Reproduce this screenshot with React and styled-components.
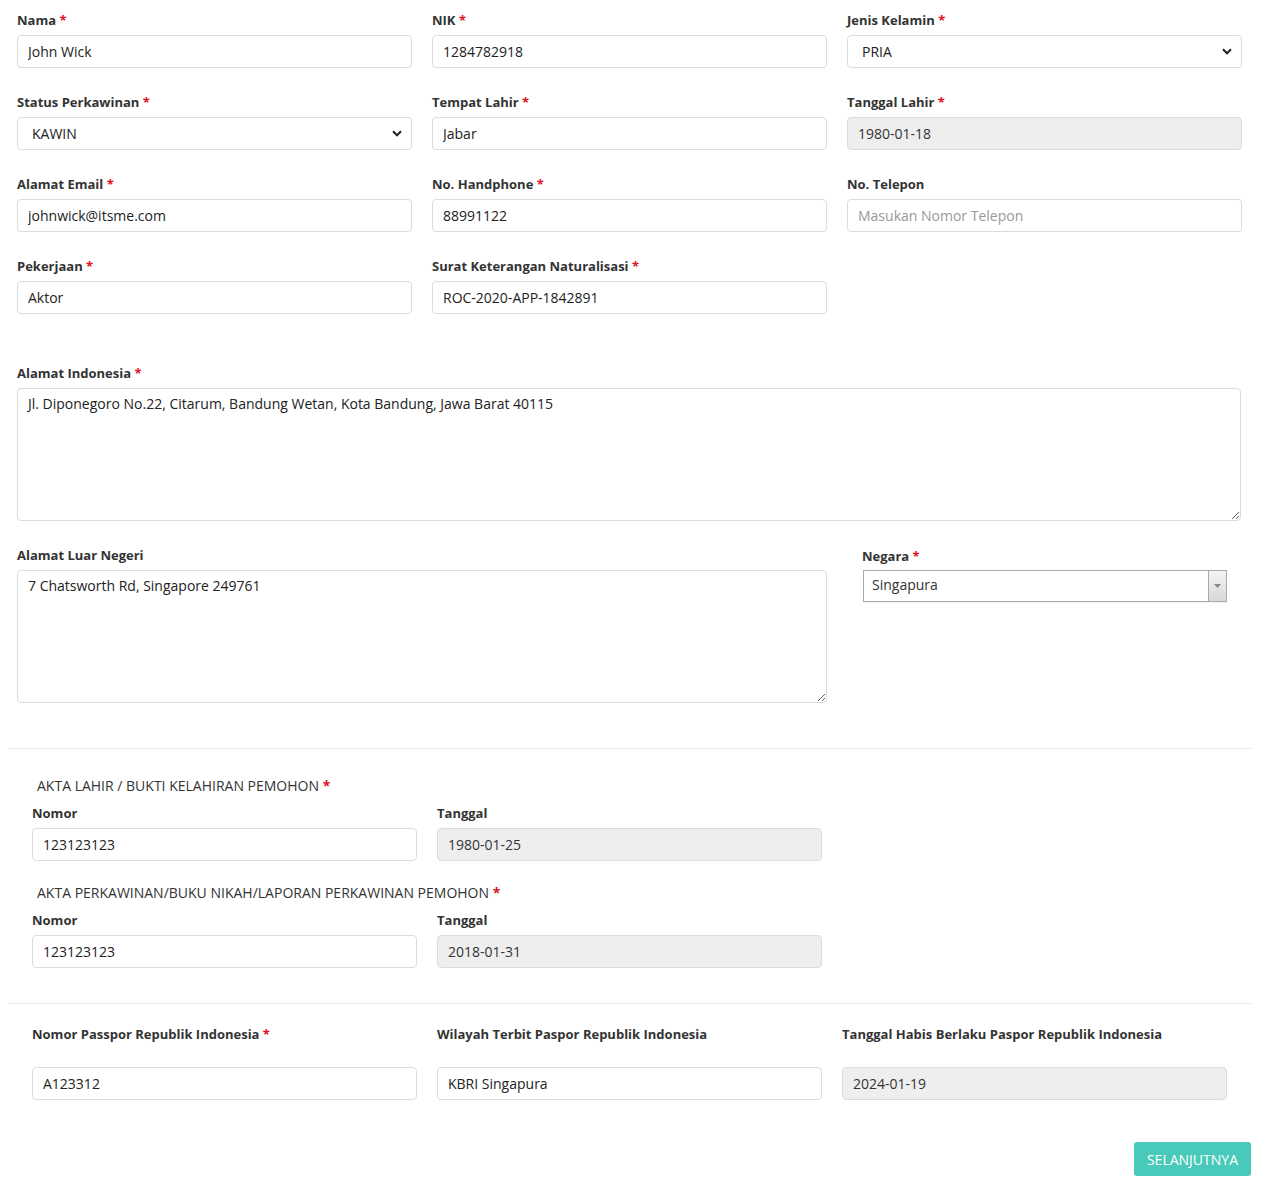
import styled, { createGlobalStyle } from 'styled-components';

const GlobalStyle = createGlobalStyle`
  * { box-sizing: border-box; }
  body {
    margin: 0;
    background: #fff;
    font-family: "Open Sans", "Liberation Sans", sans-serif;
    color: #333;
  }
`;

const chevron =
  "url(\"data:image/svg+xml;utf8,<svg xmlns='http://www.w3.org/2000/svg' width='10' height='7' viewBox='0 0 10 7'><path d='M1 1.3l4 4 4-4' fill='none' stroke='%23222' stroke-width='2'/></svg>\")";

const App = () => {
  return (
    <Page>
      <GlobalStyle />
      <TopSection>
        <Grid>
          <Field>
            <Label>Nama <Req>*</Req></Label>
            <Input defaultValue="John Wick" />
          </Field>
          <Field>
            <Label>NIK <Req>*</Req></Label>
            <Input defaultValue="1284782918" />
          </Field>
          <Field>
            <Label>Jenis Kelamin <Req>*</Req></Label>
            <Select defaultValue="PRIA">
              <option>PRIA</option>
              <option>WANITA</option>
            </Select>
          </Field>

          <Field>
            <Label>Status Perkawinan <Req>*</Req></Label>
            <Select defaultValue="KAWIN">
              <option>KAWIN</option>
              <option>BELUM KAWIN</option>
            </Select>
          </Field>
          <Field>
            <Label>Tempat Lahir <Req>*</Req></Label>
            <Input defaultValue="Jabar" />
          </Field>
          <Field>
            <Label>Tanggal Lahir <Req>*</Req></Label>
            <Input defaultValue="1980-01-18" disabled />
          </Field>

          <Field>
            <Label>Alamat Email <Req>*</Req></Label>
            <Input defaultValue="johnwick@itsme.com" />
          </Field>
          <Field>
            <Label>No. Handphone <Req>*</Req></Label>
            <Input defaultValue="88991122" />
          </Field>
          <Field>
            <Label>No. Telepon</Label>
            <Input placeholder="Masukan Nomor Telepon" />
          </Field>

          <Field>
            <Label>Pekerjaan <Req>*</Req></Label>
            <Input defaultValue="Aktor" />
          </Field>
          <Field>
            <Label>Surat Keterangan Naturalisasi <Req>*</Req></Label>
            <Input defaultValue="ROC-2020-APP-1842891" />
          </Field>
        </Grid>

        <AddressBlock>
          <Field>
            <Label>Alamat Indonesia <Req>*</Req></Label>
            <TextArea defaultValue="Jl. Diponegoro No.22, Citarum, Bandung Wetan, Kota Bandung, Jawa Barat 40115" />
          </Field>
        </AddressBlock>

        <AbroadRow>
          <Field>
            <Label>Alamat Luar Negeri</Label>
            <TextArea defaultValue="7 Chatsworth Rd, Singapore 249761" />
          </Field>
          <CountryField>
            <Label>Negara <Req>*</Req></Label>
            <Select2>
              <span>Singapura</span>
              <Select2Arrow>
                <svg width="7" height="4" viewBox="0 0 7 4">
                  <path d="M0 0h7L3.5 4z" fill="#888" />
                </svg>
              </Select2Arrow>
            </Select2>
          </CountryField>
        </AbroadRow>
      </TopSection>

      <Divider $gap={45} />

      <DocSection>
        <DocTitle>AKTA LAHIR / BUKTI KELAHIRAN PEMOHON <Req>*</Req></DocTitle>
        <DocGrid>
          <Field>
            <Label>Nomor</Label>
            <Input defaultValue="123123123" />
          </Field>
          <Field>
            <Label>Tanggal</Label>
            <Input defaultValue="1980-01-25" disabled />
          </Field>
        </DocGrid>

        <DocTitle $spaced>AKTA PERKAWINAN/BUKU NIKAH/LAPORAN PERKAWINAN PEMOHON <Req>*</Req></DocTitle>
        <DocGrid>
          <Field>
            <Label>Nomor</Label>
            <Input defaultValue="123123123" />
          </Field>
          <Field>
            <Label>Tanggal</Label>
            <Input defaultValue="2018-01-31" disabled />
          </Field>
        </DocGrid>
      </DocSection>

      <Divider $gap={35} />

      <PassportSection>
        <DocGrid>
          <Field>
            <Label $tall>Nomor Passpor Republik Indonesia <Req>*</Req></Label>
            <Input defaultValue="A123312" />
          </Field>
          <Field>
            <Label $tall>Wilayah Terbit Paspor Republik Indonesia</Label>
            <Input defaultValue="KBRI Singapura" />
          </Field>
          <Field>
            <Label $tall>Tanggal Habis Berlaku Paspor Republik Indonesia</Label>
            <Input defaultValue="2024-01-19" disabled />
          </Field>
        </DocGrid>
      </PassportSection>

      <Actions>
        <NextButton type="button">SELANJUTNYA</NextButton>
      </Actions>
    </Page>
  );
};

const Page = styled.div`
  width: 1268px;
  min-height: 1182px;
  padding: 11px 17px 7px 8px;
`;

const TopSection = styled.section`
  padding: 0 10px 0 9px;
`;

const Grid = styled.div`
  display: grid;
  grid-template-columns: repeat(3, 395px);
  column-gap: 20px;
  row-gap: 25px;
`;

const Field = styled.div`
  display: flex;
  flex-direction: column;
  min-width: 0;
`;

const Label = styled.label`
  font-size: 13px;
  font-weight: 700;
  line-height: 18px;
  color: #333;
  margin-bottom: ${(p) => (p.$tall ? '24px' : '6px')};
`;

const Req = styled.span`
  color: #e0101e;
  font-weight: 700;
`;

const controlCss = `
  width: 100%;
  height: 33px;
  border: 1px solid #dcdcdc;
  border-radius: 4px;
  background: #fff;
  font-family: "Open Sans", "Liberation Sans", sans-serif;
  font-size: 14px;
  color: #222;
  outline: none;
`;

const Input = styled.input`
  ${controlCss}
  padding: 0 10px;

  &::placeholder {
    color: #999;
  }

  &:disabled {
    background: #eee;
    color: #333;
    -webkit-text-fill-color: #333;
    opacity: 1;
  }
`;

const Select = styled.select`
  ${controlCss}
  appearance: none;
  padding: 0 30px 0 14px;
  background: #fff ${chevron} no-repeat right 9px center;
`;

const TextArea = styled.textarea`
  ${controlCss}
  height: 133px;
  padding: 6px 10px;
  line-height: 18px;
  resize: vertical;
`;

const AddressBlock = styled.div`
  margin-top: 50px;
`;

const AbroadRow = styled.div`
  display: grid;
  grid-template-columns: 810px 1fr;
  column-gap: 35px;
  margin-top: 25px;
`;

const CountryField = styled(Field)`
  padding-top: 1px;
  padding-right: 15px;
`;

const Select2 = styled.div`
  height: 32px;
  width: 364px;
  margin-left: 1px;
  margin-top: -1px;
  display: flex;
  align-items: center;
  justify-content: space-between;
  border: 1px solid #aaa;
  background: #fff;
  box-shadow: 0 0 2px #fff inset, 0 1px 0 rgba(0, 0, 0, 0.05);
  font-size: 14px;
  color: #333;

  span {
    padding-left: 8px;
    margin-top: -3px;
  }
`;

const Select2Arrow = styled.div`
  width: 18px;
  height: 100%;
  border-left: 1px solid #aaa;
  background: linear-gradient(#f4f4f4, #d8d8d8);
  display: flex;
  align-items: center;
  justify-content: center;
`;

const Divider = styled.hr`
  border: 0;
  border-top: 1px solid #e6e6e6;
  margin: ${(p) => p.$gap}px 0 0;
  width: 1243px;
`;

const DocSection = styled.section`
  padding: 28px 0 0 24px;
`;

const DocTitle = styled.div`
  font-size: 14px;
  line-height: 18px;
  color: #333;
  padding-left: 5px;
  margin-top: ${(p) => (p.$spaced ? '23px' : '0')};
  margin-bottom: 9px;
`;

const DocGrid = styled.div`
  display: grid;
  grid-template-columns: repeat(3, 385px);
  column-gap: 20px;
`;

const PassportSection = styled.section`
  padding: 21px 0 0 24px;
`;

const Actions = styled.div`
  display: flex;
  justify-content: flex-end;
  margin-top: 42px;
`;

const NextButton = styled.button`
  height: 34px;
  padding: 0 13px;
  border: 0;
  border-radius: 3px;
  background: #48c9b9;
  color: #fff;
  font-family: "Open Sans", "Liberation Sans", sans-serif;
  font-size: 14px;
  cursor: pointer;
`;

export default App;
